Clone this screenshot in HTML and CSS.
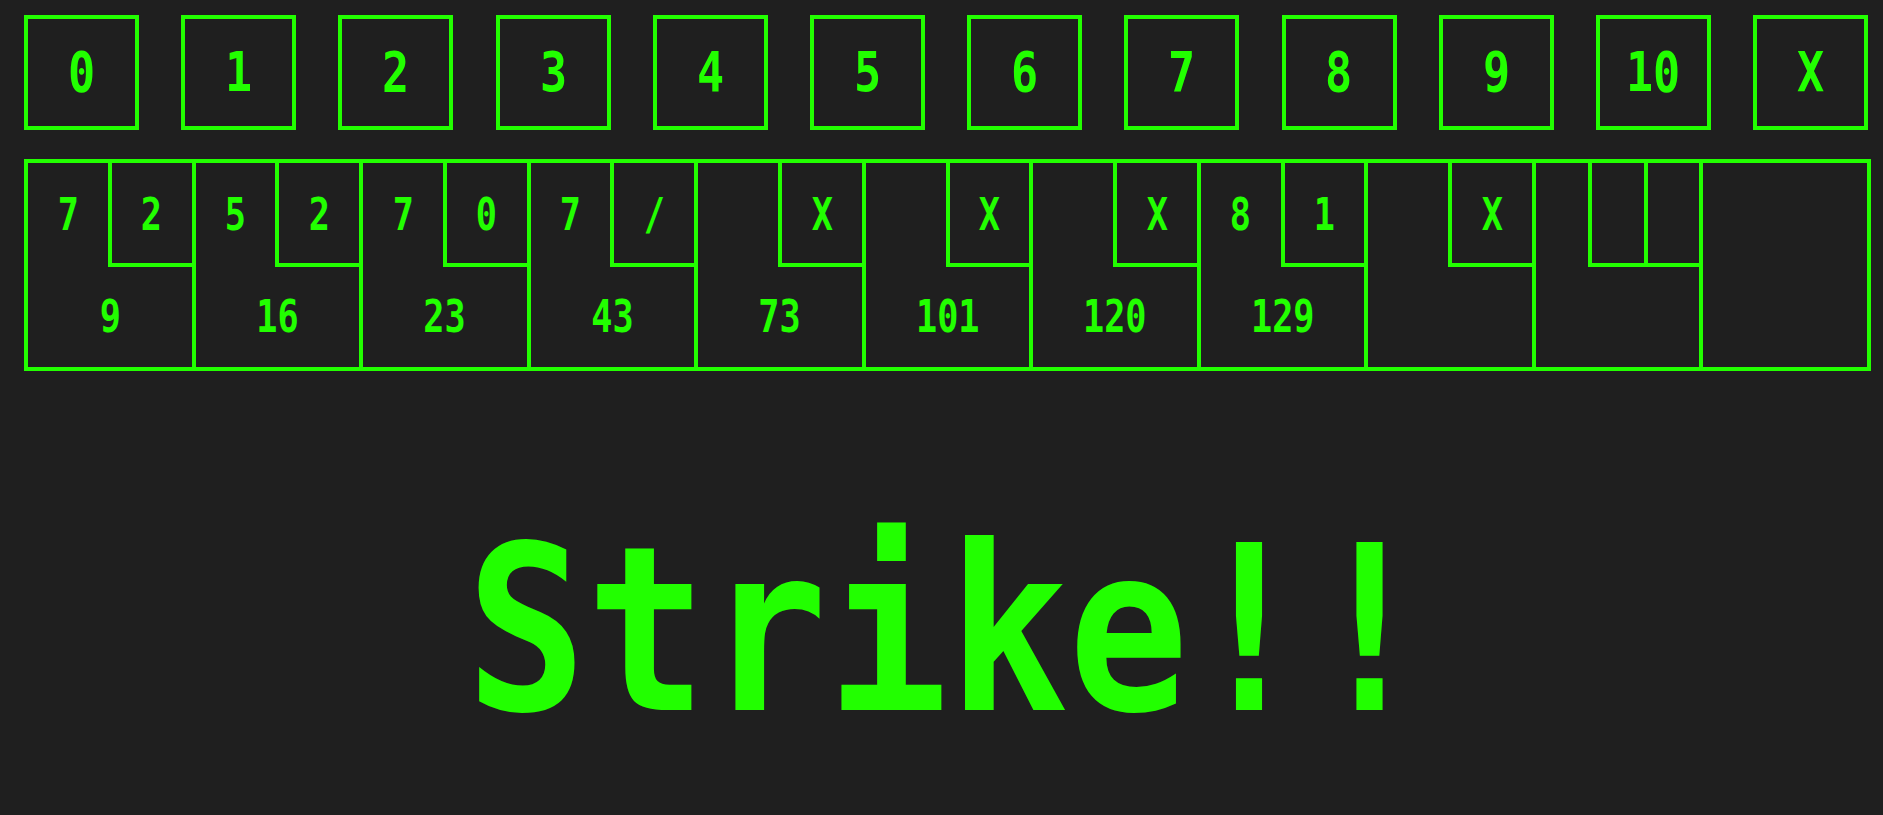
FILE: index.html
```html
<!DOCTYPE html>
<html lang="en">
<head>
<meta charset="utf-8">
<title>Bowling</title>
<link rel="stylesheet" href="styles.css">
</head>
<body>
<main class="app">
  <div class="pins">
    <button class="pin"><span class="lbl">0</span></button>
    <button class="pin"><span class="lbl">1</span></button>
    <button class="pin"><span class="lbl">2</span></button>
    <button class="pin"><span class="lbl">3</span></button>
    <button class="pin"><span class="lbl">4</span></button>
    <button class="pin"><span class="lbl">5</span></button>
    <button class="pin"><span class="lbl">6</span></button>
    <button class="pin"><span class="lbl">7</span></button>
    <button class="pin"><span class="lbl">8</span></button>
    <button class="pin"><span class="lbl">9</span></button>
    <button class="pin"><span class="lbl">10</span></button>
    <button class="pin"><span class="lbl">X</span></button>
  </div>

  <div class="board">
    <div class="frame">
      <div class="rolls"><div class="ball"><span class="lbl">7</span></div><div class="ball box"><span class="lbl">2</span></div></div>
      <div class="total"><span class="lbl">9</span></div>
    </div>
    <div class="frame">
      <div class="rolls"><div class="ball"><span class="lbl">5</span></div><div class="ball box"><span class="lbl">2</span></div></div>
      <div class="total"><span class="lbl">16</span></div>
    </div>
    <div class="frame">
      <div class="rolls"><div class="ball"><span class="lbl">7</span></div><div class="ball box"><span class="lbl">0</span></div></div>
      <div class="total"><span class="lbl">23</span></div>
    </div>
    <div class="frame">
      <div class="rolls"><div class="ball"><span class="lbl">7</span></div><div class="ball box"><span class="lbl">/</span></div></div>
      <div class="total"><span class="lbl">43</span></div>
    </div>
    <div class="frame">
      <div class="rolls"><div class="ball"></div><div class="ball box"><span class="lbl">X</span></div></div>
      <div class="total"><span class="lbl">73</span></div>
    </div>
    <div class="frame">
      <div class="rolls"><div class="ball"></div><div class="ball box"><span class="lbl">X</span></div></div>
      <div class="total"><span class="lbl">101</span></div>
    </div>
    <div class="frame">
      <div class="rolls"><div class="ball"></div><div class="ball box"><span class="lbl">X</span></div></div>
      <div class="total"><span class="lbl">120</span></div>
    </div>
    <div class="frame">
      <div class="rolls"><div class="ball"><span class="lbl">8</span></div><div class="ball box"><span class="lbl">1</span></div></div>
      <div class="total"><span class="lbl">129</span></div>
    </div>
    <div class="frame">
      <div class="rolls"><div class="ball"></div><div class="ball box"><span class="lbl">X</span></div></div>
      <div class="total"></div>
    </div>
    <div class="frame">
      <div class="rolls tenth"><div class="ball"></div><div class="ball box"></div><div class="ball box"></div></div>
      <div class="total"></div>
    </div>
    <div class="frame">
      <div class="rolls"></div>
      <div class="total"></div>
    </div>
  </div>

  <div class="banner"><span class="banner-text">Strike!!</span></div>
</main>
</body>
</html>
```

FILE: styles.css
```css
html, body {
  margin: 0;
  padding: 0;
  background: #1f1f1f;
}

body {
  font-family: "DejaVu Sans Mono", "Liberation Mono", monospace;
  font-weight: bold;
  color: #22ff00;
}

.app {
  padding: 15px 12px 0 24px;
}

.lbl {
  display: inline-block;
  transform: scaleX(0.8);
}

/* pin buttons */
.pins {
  display: flex;
  gap: 42.2px;
}

.pin {
  width: 115px;
  height: 115px;
  box-sizing: border-box;
  border: 4px solid #22ff00;
  background: transparent;
  color: #22ff00;
  font-family: inherit;
  font-weight: bold;
  font-size: 55px;
  line-height: 1;
  padding: 0;
  margin: 0;
  display: flex;
  align-items: center;
  justify-content: center;
}

.pin .lbl {
  transform: scaleX(0.82);
}

/* score board */
.board {
  margin-top: 29px;
  display: grid;
  grid-template-columns: repeat(11, 1fr);
  column-gap: 4px;
  background: #22ff00;
  border: 4px solid #22ff00;
  font-size: 44px;
  line-height: 1;
}

.frame {
  background: #1f1f1f;
  display: flex;
  flex-direction: column;
  min-width: 0;
}

.rolls {
  height: 104px;
  display: flex;
}

.ball {
  flex: 1;
  height: 100px;
  display: flex;
  align-items: center;
  justify-content: center;
  padding-top: 4px;
  box-sizing: border-box;
}

.box {
  flex: none;
  width: calc(50% + 2px);
  height: 104px;
  box-sizing: border-box;
  border-left: 4px solid #22ff00;
  border-bottom: 4px solid #22ff00;
  padding-top: 4px;
}

.tenth .ball,
.tenth .box {
  flex: 1;
  width: auto;
}

.total {
  height: 100px;
  display: flex;
  align-items: center;
  justify-content: center;
}

/* banner */
.banner {
  margin-top: 145px;
  margin-left: -12px;
  margin-right: -12px;
  text-align: center;
  font-size: 230px;
  line-height: 1;
}

.banner-text {
  display: inline-block;
  transform: scaleX(0.87);
}
```
